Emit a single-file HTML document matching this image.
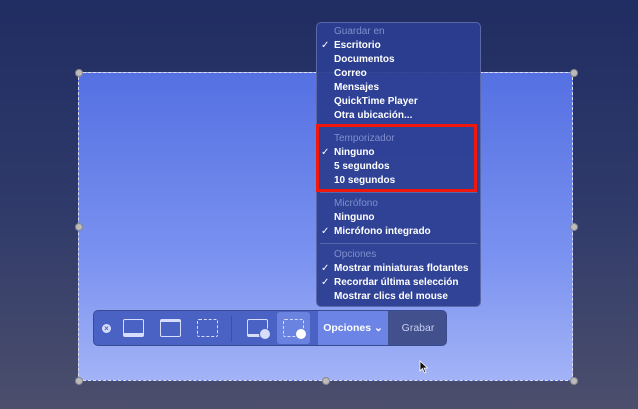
<!DOCTYPE html><html><head><style>
body{margin:0;width:638px;height:409px;overflow:hidden;position:relative;font-family:"Liberation Sans",sans-serif;background:linear-gradient(#202d62,#2f3a6a 50%,#4c4f6c);}
.sel{position:absolute;left:78px;top:72px;width:495px;height:309px;background:linear-gradient(#5570e2,#7a92f0 60%,#a3b3f6);border:1px dashed #dde;box-sizing:border-box}
.h{position:absolute;width:6px;height:6px;border-radius:50%;background:#bbb;border:1px solid #888}
.menu{position:absolute;left:316px;top:22px;width:165px;height:285px;background:rgba(44,62,145,.94);border:1px solid #5868a8;border-radius:5px;box-sizing:border-box;font-size:10px;color:#fff;font-weight:bold}
.menu div{position:absolute;left:17px;white-space:nowrap}
.menu .t{color:#7f8fcc;font-weight:normal}
.menu .c::before{content:"✓";position:absolute;left:-13px;font-weight:normal}
.sep{position:absolute;left:3px!important;right:3px;height:1px;background:#5666a8}
.red{position:absolute;left:316px;top:124px;width:161px;height:68px;border:3px solid #f0180c;box-sizing:border-box}
.bar{position:absolute;left:93px;top:310px;width:354px;height:36px;background:#4a62c4;border:1px solid #3a4a90;border-radius:5px;box-sizing:border-box;overflow:hidden}
.ic{position:absolute;border:1.5px solid #d6defc;border-radius:2px;box-sizing:border-box}
</style></head><body>
<div class="sel"></div>
<div class="h" style="left:75px;top:69px"></div><div class="h" style="left:570px;top:69px"></div>
<div class="h" style="left:75px;top:223px"></div><div class="h" style="left:570px;top:223px"></div>
<div class="h" style="left:75px;top:377px"></div><div class="h" style="left:322px;top:377px"></div><div class="h" style="left:570px;top:377px"></div>
<div class="menu">
<div class="t" style="top:3px">Guardar en</div>
<div class="c" style="top:17px">Escritorio</div>
<div style="top:31px">Documentos</div>
<div style="top:45px">Correo</div>
<div style="top:59px">Mensajes</div>
<div style="top:73px">QuickTime Player</div>
<div style="top:87px">Otra ubicación...</div>
<div class="sep" style="top:103px"></div>
<div class="t" style="top:110px">Temporizador</div>
<div class="c" style="top:124px">Ninguno</div>
<div style="top:138px">5 segundos</div>
<div style="top:152px">10 segundos</div>
<div class="sep" style="top:169px"></div>
<div class="t" style="top:175px">Micrófono</div>
<div style="top:189px">Ninguno</div>
<div class="c" style="top:203px">Micrófono integrado</div>
<div class="sep" style="top:220px"></div>
<div class="t" style="top:226px">Opciones</div>
<div class="c" style="top:240px">Mostrar miniaturas flotantes</div>
<div class="c" style="top:254px">Recordar última selección</div>
<div style="top:268px">Mostrar clics del mouse</div>
</div>
<div class="red"></div>
<div class="bar">
<div style="position:absolute;left:8px;top:13px;width:9px;height:9px;border-radius:50%;background:#d6defc;color:#4a62c4;font-size:8px;line-height:9px;text-align:center;font-weight:bold">×</div>
<div class="ic" style="left:29px;top:8px;width:21px;height:18px;border-bottom-width:4px"></div>
<div class="ic" style="left:66px;top:8px;width:21px;height:18px;border-top-width:3px"></div>
<div class="ic" style="left:103px;top:8px;width:21px;height:18px;border-style:dashed"></div>
<div style="position:absolute;left:137px;top:5px;width:1px;height:26px;background:#3c50a6"></div>
<div class="ic" style="left:153px;top:8px;width:21px;height:18px;border-bottom-width:3px"></div>
<div style="position:absolute;left:165px;top:17px;width:10px;height:10px;border-radius:50%;background:#d6defc;border:1.5px solid #4a62c4"></div>
<div style="position:absolute;left:183px;top:1px;width:33px;height:32px;background:#6a82e0;border-radius:3px"></div>
<div class="ic" style="left:189px;top:8px;width:21px;height:18px;border-style:dashed"></div>
<div style="position:absolute;left:201px;top:17px;width:10px;height:10px;border-radius:50%;background:#fff;border:1.5px solid #6a82e0"></div>
<div style="position:absolute;left:224px;top:0;width:70px;height:36px;background:#6c84e6;color:#fff;font-size:10.5px;font-weight:bold;line-height:34px;text-align:center">Opciones ⌄</div>
<div style="position:absolute;left:294px;top:0;width:60px;height:36px;background:#42508e;color:#c8d0f0;font-size:10.5px;line-height:34px;text-align:center">Grabar</div>
</div>
<svg style="position:absolute;left:419px;top:360px" width="10" height="14"><path d="M1 1 L1 11 L3.5 8.5 L5.5 13 L7 12.3 L5 8 L8.5 8 Z" fill="#111" stroke="#fff" stroke-width=".8"/></svg>
</body></html>
